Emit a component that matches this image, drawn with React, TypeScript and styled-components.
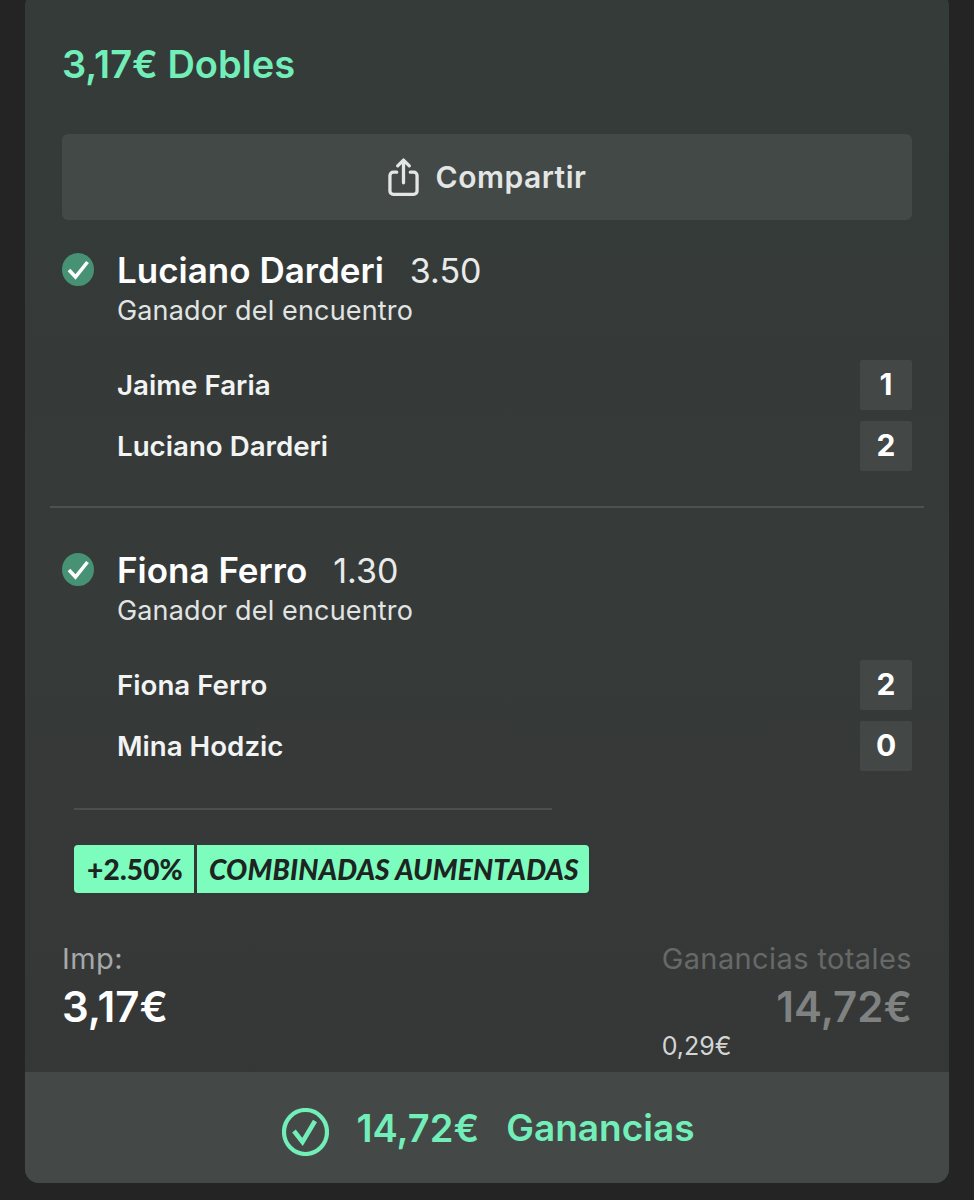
import styled, { createGlobalStyle } from "styled-components";

const GlobalStyle = createGlobalStyle`
  html, body {
    margin: 0;
    padding: 0;
    height: 1200px;
    overflow: hidden;
    background: #242424;
    font-family: Inter, "Liberation Sans", sans-serif;
  }
`;

const Card = styled.div`
  width: 924px;
  height: 1191px;
  margin: -8px 0 0 25px;
  border-radius: 14px;
  overflow: hidden;
  display: flex;
  flex-direction: column;
  background: linear-gradient(180deg, #343b39 0%, #363a39 50%, #353736 100%);
`;

const Body = styled.div`
  flex: 1;
  padding: 0 37px;
  display: flex;
  flex-direction: column;
`;

const Title = styled.h1`
  margin: 0;
  padding-top: 52px;
  height: 142px;
  box-sizing: border-box;
  font-size: 38px;
  line-height: 40px;
  font-weight: 600;
  color: #72eeb9;
`;

const ShareButton = styled.button`
  width: 850px;
  height: 86px;
  border: 0;
  border-radius: 6px;
  background: #434947;
  color: #e4e6e5;
  font: 600 30px Inter, sans-serif;
  letter-spacing: 0.5px;
  display: flex;
  align-items: center;
  justify-content: center;
  gap: 17px;
`;

const Selection = styled.section<{ $top: number }>`
  padding-top: ${(p) => p.$top}px;
`;

const Heading = styled.div`
  display: flex;
  align-items: center;
  height: 36px;
  gap: 23px;
`;

const Name = styled.span`
  font-size: 35px;
  font-weight: 600;
  color: #fff;
`;

const Odds = styled.span`
  font-size: 34px;
  font-weight: 400;
  color: #e9ebea;
  margin-left: 3px;
`;

const Market = styled.div`
  margin: 7px 0 0 55px;
  font-size: 27px;
  line-height: 32px;
  letter-spacing: 0.15px;
  color: #e2e4e3;
`;

const Players = styled.div`
  margin: 33px 0 0 55px;
  display: flex;
  flex-direction: column;
  gap: 11px;
`;

const PlayerRow = styled.div`
  display: flex;
  align-items: center;
  justify-content: space-between;
  height: 50px;
  font-size: 27.7px;
  font-weight: 600;
  color: #f2f3f3;
`;

const PlayerName = styled.span`
  margin-top: -1px;
`;

const Score = styled.span`
  width: 52px;
  height: 50px;
  padding-bottom: 2px;
  box-sizing: border-box;
  display: flex;
  align-items: center;
  justify-content: center;
  border-radius: 2px;
  background: #434746;
  color: #fff;
  font-size: 30px;
  font-weight: 700;
`;

const Divider = styled.hr`
  width: 874px;
  height: 2px;
  margin: 35px 0 0 -12px;
  border: 0;
  background: #4d5250;
`;

const ShortDivider = styled.hr`
  width: 478px;
  height: 2px;
  margin: 37px 0 0 12px;
  border: 0;
  background: #4a4e4d;
`;

const Boost = styled.div`
  display: inline-flex;
  align-self: flex-start;
  margin: 35px 0 0 12px;
  height: 48px;
  gap: 3px;
  font-family: Lato, sans-serif;
  font-weight: 900;
  color: #1d2421;
`;

const BoostPart = styled.span<{ $italic?: boolean }>`
  display: flex;
  align-items: center;
  box-sizing: border-box;
  width: ${(p) => (p.$italic ? 392 : 120)}px;
  background: #7cfdbd;
  padding-left: ${(p) => (p.$italic ? 12 : 13)}px;
  font-size: 28px;
  letter-spacing: 0.2px;
  font-style: ${(p) => (p.$italic ? "italic" : "normal")};
  border-radius: ${(p) => (p.$italic ? "0 4px 4px 0" : "4px 0 0 4px")};
  white-space: nowrap;
`;

const Totals = styled.div`
  display: flex;
  justify-content: space-between;
  margin-top: 48px;
`;

const Column = styled.div<{ $end?: boolean }>`
  display: flex;
  flex-direction: column;
  align-items: ${(p) => (p.$end ? "flex-end" : "flex-start")};
`;

const Label = styled.div<{ $dim?: boolean }>`
  font-size: 29px;
  line-height: 36px;
  letter-spacing: 0.4px;
  color: ${(p) => (p.$dim ? "#666968" : "#a6a9a8")};
`;

const Amount = styled.div<{ $dim?: boolean }>`
  margin-top: 6px;
  font-size: 42px;
  line-height: 48px;
  font-weight: 600;
  color: ${(p) => (p.$dim ? "#7f8281" : "#fff")};
`;

const Cashout = styled.div`
  align-self: flex-start;
  font-size: 25px;
  line-height: 30px;
  color: #d3d5d4;
`;

const Footer = styled.footer`
  height: 111px;
  padding-left: 3px;
  background: #444847;
  display: flex;
  align-items: center;
  justify-content: center;
  color: #72eeb9;
  font-size: 37px;
  font-weight: 600;
  flex-shrink: 0;
`;

const FooterAmount = styled.span`
  margin: 0 27px;
  font-size: 38px;
`;

const FooterCheck = styled.svg`
  margin-top: 9px;
  flex-shrink: 0;
`;

const WonBadge = styled.svg`
  flex-shrink: 0;
`;

const ShareIcon = () => (
  <svg width="31" height="40" viewBox="0 0 32 40" fill="none" stroke="#e4e6e5" strokeWidth="3.4" strokeLinecap="round" strokeLinejoin="round">
    <path d="M9 15H5.5A3.5 3.5 0 0 0 2 18.5v16A3.5 3.5 0 0 0 5.5 38h21a3.5 3.5 0 0 0 3.5-3.5v-16a3.5 3.5 0 0 0-3.5-3.5H23" />
    <path d="M16 26V3M10 8.5 16 2.5l6 6" />
  </svg>
);

const WonIcon = () => (
  <WonBadge width="32" height="34" viewBox="0 0 32 34">
    <ellipse cx="16" cy="16.5" rx="16" ry="16.5" fill="#479274" />
    <path d="M7 17 13.5 24 25.5 9" fill="none" stroke="#fff" strokeWidth="3.6" />
  </WonBadge>
);

const FooterCheckIcon = () => (
  <FooterCheck width="47" height="48" viewBox="0 0 47 48" fill="none" stroke="#72eeb9">
    <ellipse cx="23.5" cy="24" rx="21.5" ry="22" strokeWidth="4.2" />
    <path d="M12 23 20.5 34 33 13" strokeWidth="4.6" />
  </FooterCheck>
);

type Pick = {
  name: string;
  odds: string;
  top: number;
  players: [string, number][];
};

const picks: Pick[] = [
  { name: "Luciano Darderi", odds: "3.50", top: 32, players: [["Jaime Faria", 1], ["Luciano Darderi", 2]] },
  { name: "Fiona Ferro", odds: "1.30", top: 44, players: [["Fiona Ferro", 2], ["Mina Hodzic", 0]] },
];

const App = () => (
  <>
    <GlobalStyle />
    <Card>
      <Body>
        <Title>3,17€ Dobles</Title>
        <ShareButton>
          <ShareIcon />
          Compartir
        </ShareButton>
        {picks.map((pick, i) => (
          <Selection key={pick.name} $top={pick.top}>
            <Heading>
              <WonIcon />
              <Name>{pick.name}</Name>
              <Odds>{pick.odds}</Odds>
            </Heading>
            <Market>Ganador del encuentro</Market>
            <Players>
              {pick.players.map(([player, score]) => (
                <PlayerRow key={player}>
                  <PlayerName>{player}</PlayerName>
                  <Score>{score}</Score>
                </PlayerRow>
              ))}
            </Players>
            {i === 0 ? <Divider /> : <ShortDivider />}
          </Selection>
        ))}
        <Boost>
          <BoostPart>+2.50%</BoostPart>
          <BoostPart $italic>COMBINADAS AUMENTADAS</BoostPart>
        </Boost>
        <Totals>
          <Column>
            <Label>Imp:</Label>
            <Amount>3,17€</Amount>
          </Column>
          <Column $end>
            <Label $dim>Ganancias totales</Label>
            <Amount $dim>14,72€</Amount>
            <Cashout>0,29€</Cashout>
          </Column>
        </Totals>
      </Body>
      <Footer>
        <FooterCheckIcon />
        <FooterAmount>14,72€</FooterAmount>
        Ganancias
      </Footer>
    </Card>
  </>
);

export default App;
